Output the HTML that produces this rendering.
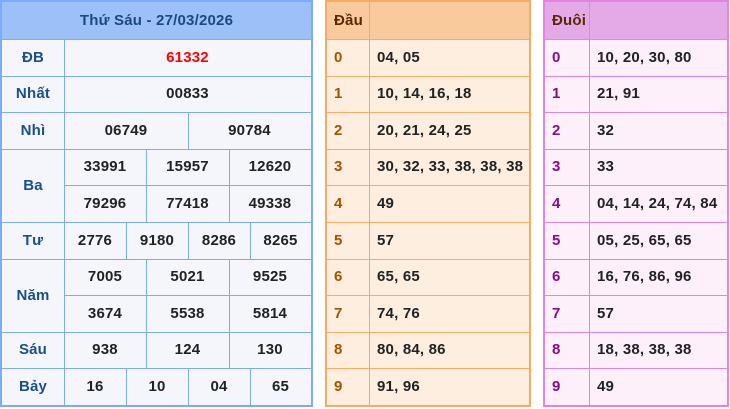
<!DOCTYPE html>
<html><head><meta charset="utf-8"><style>
body{margin:0;width:730px;height:409px;background:#fff;position:relative;overflow:hidden;font-family:"Liberation Sans",sans-serif;font-weight:bold;font-size:15px;letter-spacing:0.2px}
.a{position:absolute}
.h{position:absolute;height:1px}
.v{position:absolute;width:1px}
.c{position:absolute;text-align:center;color:#222}
.l{position:absolute;color:#222}
</style></head><body>
<div class="a" style="left:0;top:0;width:309px;height:403px;border:2px solid #7aacf7;background:#f4f6fb"></div>
<div class="a" style="left:2px;top:2px;width:309px;height:37px;background:#9cc0f8"></div>
<div class="c" style="left:2px;top:2px;width:309px;line-height:37px;color:#1b4a80">Thứ Sáu - 27/03/2026</div>
<div class="a" style="left:325px;top:0;width:202px;height:403px;border:2px solid #f5ab63;background:#fdeee0"></div>
<div class="a" style="left:327px;top:2px;width:202px;height:37px;background:#f9cb9c"></div>
<div class="a" style="left:543px;top:0;width:182px;height:403px;border:2px solid #e583e0;background:#fdf0fb"></div>
<div class="a" style="left:545px;top:2px;width:182px;height:37px;background:#e4aae7"></div>
<div id="L"></div>
<script>
var o='';
function H(x1,x2,y,c){o+='<div class="h" style="left:'+x1+'px;width:'+(x2-x1)+'px;top:'+y+'px;background:'+c+'"></div>';}
function V(x,y1,y2,c){o+='<div class="v" style="left:'+x+'px;top:'+y1+'px;height:'+(y2-y1)+'px;background:'+c+'"></div>';}
function C(x1,x2,y1,y2,t,col){o+='<div class="c" style="left:'+x1+'px;width:'+(x2-x1)+'px;top:'+y1+'px;line-height:'+(y2-y1)+'px;'+(col?'color:'+col:'')+'">'+t+'</div>';}
function T(x,y1,y2,t,col){o+='<div class="l" style="left:'+x+'px;top:'+y1+'px;line-height:'+(y2-y1)+'px;'+(col?'color:'+col:'')+'">'+t+'</div>';}
var B='#7aacf7';
[39,76,112,149,222,259,332,368].forEach(function(y){H(2,311,y,B)});
H(64,311,185,B);H(64,311,295,B);
V(64,39,405,B);
V(188,112,149,B);
[146,229].forEach(function(x){V(x,149,222,B);V(x,259,368,B)});
[126,188,250].forEach(function(x){V(x,222,259,B);V(x,368,405,B)});
var LB='#1b4f8a';
C(2,64,39,76,'ĐB',LB);C(2,64,76,112,'Nhất',LB);C(2,64,112,149,'Nhì',LB);C(2,64,149,222,'Ba',LB);
C(2,64,222,259,'Tư',LB);C(2,64,259,332,'Năm',LB);C(2,64,332,368,'Sáu',LB);C(2,64,368,405,'Bảy',LB);
C(64,311,39,76,'61332','#f00');C(64,311,76,112,'00833');
C(64,188,112,149,'06749');C(188,311,112,149,'90784');
function three(y1,y2,a){C(64,146,y1,y2,a[0]);C(146,229,y1,y2,a[1]);C(229,311,y1,y2,a[2]);}
function four(y1,y2,a){C(64,126,y1,y2,a[0]);C(126,188,y1,y2,a[1]);C(188,250,y1,y2,a[2]);C(250,311,y1,y2,a[3]);}
three(149,185,['33991','15957','12620']);three(185,222,['79296','77418','49338']);
four(222,259,['2776','9180','8286','8265']);
three(259,295,['7005','5021','9525']);three(295,332,['3674','5538','5814']);
three(332,368,['938','124','130']);four(368,405,['16','10','04','65']);
var ys=[39,76,112,149,185,222,259,295,332,368,405];
var OB='#f5ab63',PB='#e583e0';
ys.slice(0,10).forEach(function(y){H(327,529,y,OB);H(545,727,y,PB)});
V(369,2,405,OB);V(589,2,405,PB);
T(334,2,39,'Đầu','#5a2800');T(552,2,39,'Đuôi','#5a2800');
var d=['04, 05','10, 14, 16, 18','20, 21, 24, 25','30, 32, 33, 38, 38, 38','49','57','65, 65','74, 76','80, 84, 86','91, 96'];
var e=['10, 20, 30, 80','21, 91','32','33','04, 14, 24, 74, 84','05, 25, 65, 65','16, 76, 86, 96','57','18, 38, 38, 38','49'];
for(var i=0;i<10;i++){T(334,ys[i],ys[i+1],i,'#a35200');T(377,ys[i],ys[i+1],d[i]);T(552,ys[i],ys[i+1],i,'#8a0a8a');T(597,ys[i],ys[i+1],e[i]);}
document.getElementById('L').outerHTML=o;
</script>
</body></html>
